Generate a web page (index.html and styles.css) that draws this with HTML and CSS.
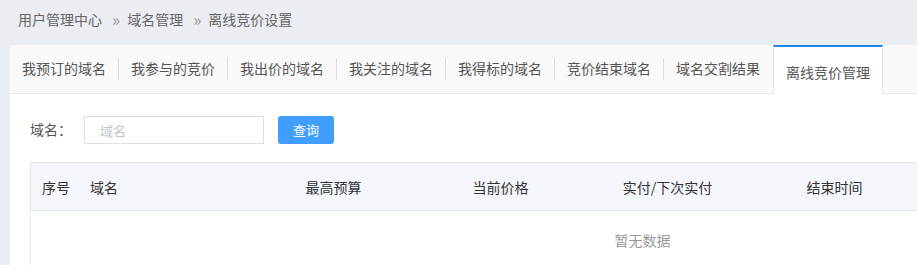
FILE: index.html
```html
<!DOCTYPE html>
<html lang="zh-CN">
<head>
    <meta charset="UTF-8">
    <title>离线竞价设置</title>
    <link rel="stylesheet" href="styles.css">
</head>
<body>
    <div class="crumbs">
        <span>用户管理中心</span>
        <span class="sep">»</span>
        <span>域名管理</span>
        <span class="sep">»</span>
        <span>离线竞价设置</span>
    </div>

    <div class="panel">
        <div class="tabs">
            <a class="tab">我预订的域名</a>
            <a class="tab">我参与的竞价</a>
            <a class="tab">我出价的域名</a>
            <a class="tab">我关注的域名</a>
            <a class="tab">我得标的域名</a>
            <a class="tab">竞价结束域名</a>
            <a class="tab">域名交割结果</a>
            <a class="tab active">离线竞价管理</a>
        </div>

        <div class="content">
            <div class="search">
                <label for="domain">域名：</label>
                <input type="text" id="domain" placeholder="域名">
                <button type="button">查询</button>
            </div>

            <div class="table">
                <div class="row head">
                    <div class="cell left">序号</div>
                    <div class="cell left">域名</div>
                    <div class="cell">最高预算</div>
                    <div class="cell">当前价格</div>
                    <div class="cell">实付/下次实付</div>
                    <div class="cell">结束时间</div>
                    <div class="cell"></div>
                </div>
                <div class="empty">暂无数据</div>
            </div>
        </div>
    </div>
</body>
</html>
```

FILE: styles.css
```css
body {
    margin: 0;
    background-color: #eaedf1;
    font-family: "Noto Sans CJK SC", "Liberation Sans", sans-serif;
    font-size: 14px;
    color: #333;
    overflow: hidden;
}
.crumbs {
    height: 45px;
    padding: 0 18px;
    display: flex;
    align-items: center;
    color: #666;
    line-height: 1;
    padding-bottom: 7px;
    box-sizing: border-box;
}
.crumbs .sep {
    color: #999;
    margin: 0 7px 0 10px;
    font-size: 17px;
    margin-top: -2px;
}
.panel {
    margin-left: 10px;
    width: 1300px;
    background: white;
}
.tabs {
    display: flex;
    height: 49px;
    background-color: #f9f9f9;
    border-bottom: 1px solid #e6e8ec;
    box-sizing: border-box;
}
.tab {
    position: relative;
    display: flex;
    align-items: center;
    padding: 0 12px;
    color: #555;
    line-height: 1;
    padding-bottom: 2px;
    border-right: 1px solid transparent;
}
.tab::after {
    content: "";
    position: absolute;
    right: -1px;
    top: 13px;
    height: 22px;
    width: 1px;
    background: #ddd;
}
.tab:nth-child(7)::after,
.tab.active::after {
    display: none;
}
.tab.active {
    background: white;
    border-top: 2px solid #1e88e5;
    border-left: 1px solid #e6e8ec;
    border-right: 1px solid #e6e8ec;
    margin-bottom: -1px;
    padding: 0 12px;
    padding-top: 2px;
    color: #555;
}
.content {
    padding: 22px 20px 0;
}
.search {
    display: flex;
    align-items: center;
}
.search label {
    width: 54px;
    color: #555;
    line-height: 1;
    margin-top: -2px;
}
.search input {
    width: 180px;
    height: 28px;
    box-sizing: border-box;
    border: 1px solid #dcdfe6;
    padding: 0 15px;
    font-family: inherit;
    font-size: 13px;
    outline: none;
}
.search input::placeholder {
    color: #c0c4cc;
}
.search button {
    margin-left: 14px;
    width: 56px;
    height: 28px;
    margin-top: -1px;
    background-color: #409eff;
    color: white;
    border: none;
    border-radius: 3px;
    font-family: inherit;
    font-size: 13px;
    cursor: pointer;
}
.table {
    margin-top: 18px;
    width: 1223px;
    border: 1px solid #e4e8ee;
}
.row {
    display: grid;
    grid-template-columns: 48px 171px 167px 167px 167px 167px 1fr;
}
.head {
    height: 47px;
    background-color: #f3f6fa;
    border-bottom: 1px solid #e4e8ee;
}
.cell {
    display: flex;
    align-items: center;
    justify-content: center;
    color: #333;
    line-height: 1;
}
.cell.left {
    justify-content: flex-start;
    padding-left: 11px;
}
.empty {
    height: 58px;
    display: flex;
    align-items: center;
    justify-content: center;
    color: #999;
    line-height: 1;
}
```
